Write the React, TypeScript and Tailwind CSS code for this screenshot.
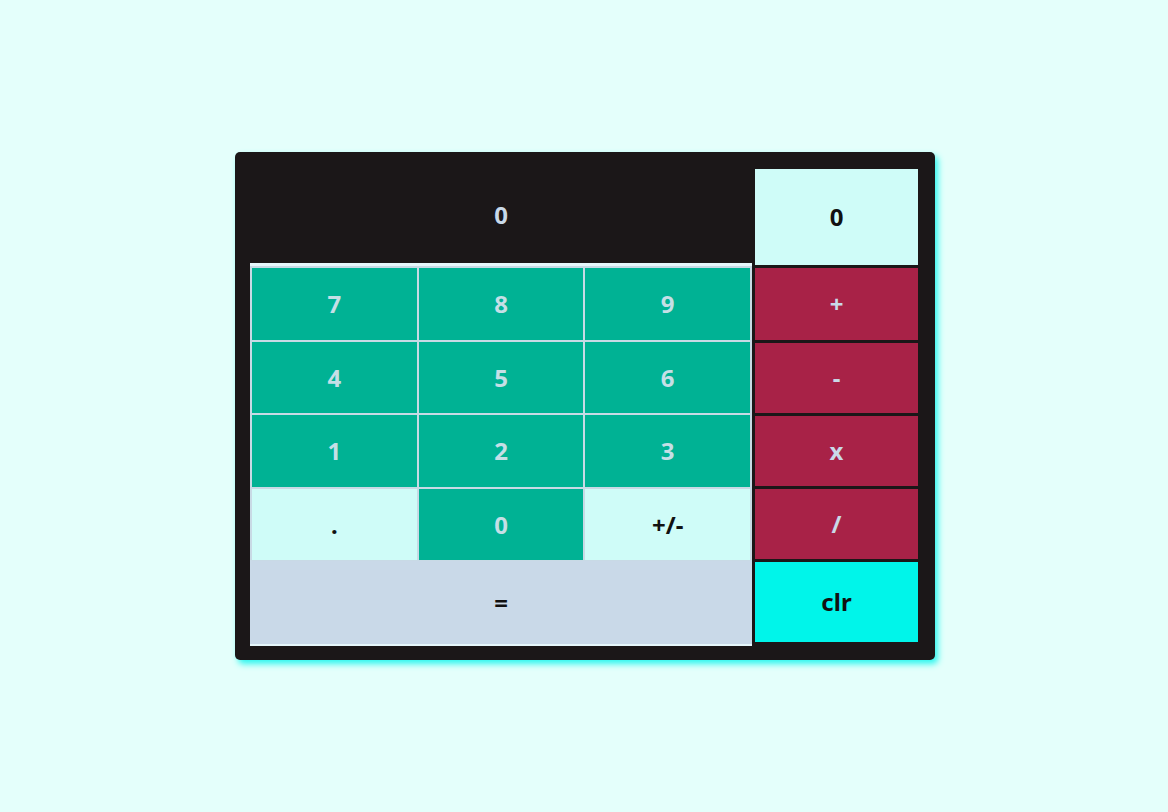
import React from "react";

const teal = "bg-[#00b294] text-[#c5dfe6]";
const light = "bg-[#cffcf8] text-[#111111]";

export default function App() {
  const digits: { label: string; cls: string }[] = [
    { label: "7", cls: teal },
    { label: "8", cls: teal },
    { label: "9", cls: teal },
    { label: "4", cls: teal },
    { label: "5", cls: teal },
    { label: "6", cls: teal },
    { label: "1", cls: teal },
    { label: "2", cls: teal },
    { label: "3", cls: teal },
    { label: ".", cls: light },
    { label: "0", cls: teal },
    { label: "+/-", cls: light },
  ];
  const ops = ["+", "-", "x", "/"];
  return (
    <div
      className="w-full h-[812px] bg-[#e4fffb] flex justify-center pt-[152px] pl-[2px]"
      style={{ fontFamily: '"Noto Sans", "Open Sans", sans-serif' }}
    >
      <div className="w-[700px] h-[508px] bg-[#1b1718] rounded-[5px] shadow-[3px_4px_6px_#2ef7ef] pl-[15px] pr-[17px] pt-[15px] flex gap-[3px] text-[24px] font-bold">
        <div className="w-[502px] flex flex-col">
          <div className="h-[96px] flex items-center justify-center text-[#c9d9e8]">0</div>
          <div className="h-[3px] bg-[#e6f7fb]" />
          <div className="grid grid-cols-3 grid-rows-[72px_71px_72px_71px] gap-[2px] p-[2px] pb-[1px] bg-[#c8dae5]">
            {digits.map((d, i) => (
              <div key={i} className={`flex items-center justify-center ${d.cls}`}>
                {d.label}
              </div>
            ))}
          </div>
          <div className="h-[83px] bg-[#c9d9e8] text-[#111111] flex items-center justify-center">=</div>
          <div className="h-[2px] bg-[#e6f7fb]" />
        </div>
        <div className="w-[163px] flex flex-col gap-[3px] pt-[2px]">
          <div className="h-[96px] bg-[#cffcf8] text-[#111111] flex items-center justify-center">0</div>
          {ops.map((o, i) => (
            <div
              key={o}
              className={`${i === 0 ? "h-[72px]" : "h-[70px]"} bg-[#a82247] text-[#c9d9e8] flex items-center justify-center`}
            >
              {o}
            </div>
          ))}
          <div className="h-[80px] bg-[#00f5ea] text-[#111111] flex items-center justify-center">clr</div>
        </div>
      </div>
    </div>
  );
}
